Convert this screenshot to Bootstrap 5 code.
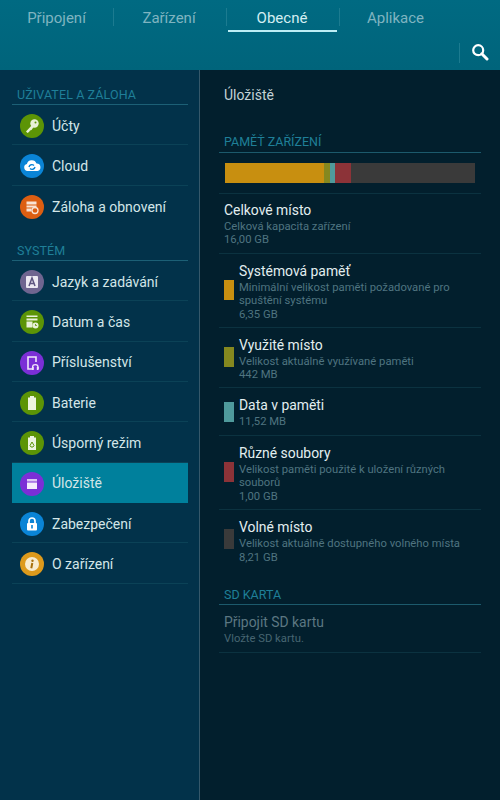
<!DOCTYPE html>
<html lang="cs">
<head>
    <meta charset="UTF-8">
    <meta name="viewport" content="width=device-width, initial-scale=1.0">
    <title>Úložiště</title>
    <link href="https://cdn.jsdelivr.net/npm/bootstrap@5.3.0/dist/css/bootstrap.min.css" rel="stylesheet">
    <style>
        html, body { height: 800px; overflow: hidden; }
        body { background: #021f2d; font-family: Roboto, "Noto Sans", sans-serif; color: #dfeef0; }

        /* top bar */
        .top-bar { height: 70px; background: linear-gradient(#006a82, #00647b); }
        .tab-row { height: 35px; }
        .tab-item { height: 32px; font-size: 15px; color: #7fb4c0; line-height: 36px; text-align: center; }
        .tab-one { width: 113px; }
        .tab-two { width: 112px; padding-right: 2px; }
        .tab-three { width: 109px; margin: 0 2px 0 1px; color: #d4eef2; border-bottom: 2px solid #bdeef5; padding-right: 1px; }
        .tab-four { width: 111px; }
        .tab-sep { width: 1px; height: 18px; margin-top: 8px; background: #1c7b90; }
        .search-row { height: 35px; }
        .search-sep { width: 1px; height: 20px; margin-top: 8px; background: #1c7b90; }
        .search-ico { width: 18px; height: 18px; margin: 8px 11px 0 11px; }

        /* left menu */
        .side-menu { width: 200px; height: 730px; background: #02324a; border-right: 1px solid #35586a; padding: 0 11px 0 12px; }
        .sect-head { height: 35px; padding: 18px 0 0 5px; font-size: 12.5px; line-height: 14px; letter-spacing: .1px; color: #1f7f98; border-bottom: 1px solid #1c6076; }
        .menu-row { height: 40.33px; padding: 3px 0 0 8px; background: transparent; border: 0; border-bottom: 1px solid #0b4257; color: #d3e6e8; font-size: 14px; gap: 8px; border-radius: 0 !important; }
        .menu-row.on { background: #00809c; border-bottom-color: #00809c; }
        .menu-row.last { border-bottom: 0; }
        .round-ico { width: 24px; height: 24px; border-radius: 50%; flex: none; }
        .round-ico svg { width: 24px; height: 24px; display: block; }
        .i-green { background: #5c9406; }
        .i-blue { background: #0a84d6; }
        .i-orange { background: #dc5e12; }
        .i-grey { background: #6f6590; }
        .i-violet { background: #7b2fd6; }
        .i-amber { background: #dd9a1c; }

        /* right pane */
        .main-pane { width: 300px; padding: 0 19px; }
        .pane-title { height: 48px; padding: 16px 0 0 5px; font-size: 14px; line-height: 18px; color: #c2d2d6; }
        .pane-head { height: 35px; padding: 18px 0 0 5px; font-size: 12.5px; line-height: 14px; color: #1f7f98; border-bottom: 1px solid #1c5a6c; }
        .pane-head.top-head { padding-top: 17px; }
        .usage-wrap { height: 41px; padding: 10px 6px 0; border-bottom: 1px solid #0b3240; }
        .usage-bar { height: 20px; background: #3a3a3a; border-radius: 0; }
        .usage-bar > div { height: 20px; }
        .info-row { border-bottom: 1px solid #0b3240; padding-left: 5px; }
        .info-row.swatched { gap: 5px; }
        .info-row.no-line { border-bottom: 0; }
        .info-text { padding-top: 2px; }
        .info-title { font-size: 13.9px; line-height: 18px; margin-bottom: 1px; color: #e2eef0; }
        .info-sub { font-size: 11.25px; line-height: 13.4px; color: #4f7480; }
        .row-plain { height: 60px; padding-top: 7px; }
        .row-tall { height: 74px; }
        .row-mid { height: 60px; }
        .row-low { height: 48px; }
        .row-sd { height: 48px; padding-top: 8px; }
        .swatch { width: 10px; height: 20px; flex: none; margin-top: -2px; }
        .row-low .swatch { margin-top: 0; }
        .muted-row .info-title { color: #5c7782; }
        .muted-row .info-sub { color: #466571; }
        .c-yellow { background: #c88f10; }
        .c-olive { background: #85881f; }
        .c-teal { background: #4f9a9c; }
        .c-red { background: #8c3338; }
        .c-gray { background: #3a3a3a; }
    </style>
</head>
<body>
    <div class="top-bar">
        <div class="d-flex tab-row">
            <div class="tab-item tab-one">Připojení</div>
            <div class="tab-sep"></div>
            <div class="tab-item tab-two">Zařízení</div>
            <div class="tab-sep"></div>
            <div class="tab-item tab-three">Obecné</div>
            <div class="tab-sep"></div>
            <div class="tab-item tab-four">Aplikace</div>
        </div>
        <div class="d-flex justify-content-end search-row">
            <div class="search-sep"></div>
            <svg class="search-ico" viewBox="0 0 18 18">
                <circle cx="7.2" cy="7.2" r="5" fill="none" stroke="#fff" stroke-width="2.2"/>
                <path d="M10.8 10.8L16 16" stroke="#fff" stroke-width="3" stroke-linecap="round"/>
            </svg>
        </div>
    </div>

    <div class="d-flex">
        <div class="side-menu">
            <div class="sect-head">UŽIVATEL A ZÁLOHA</div>
            <div class="list-group">
                <div class="list-group-item d-flex align-items-center menu-row">
                    <span class="round-ico i-green">
                        <svg viewBox="0 0 24 24"><circle cx="14.5" cy="9.5" r="4.2" fill="#e8f0d8"/><path d="M12 11L6 17.5l1.5 1.5 1.500-1 1-1.500 1.500-.5 2.500-3.500z" fill="#e8f0d8"/><circle cx="15.5" cy="8.5" r="1" fill="#5c9406"/></svg>
                    </span>Účty
                </div>
                <div class="list-group-item d-flex align-items-center menu-row">
                    <span class="round-ico i-blue">
                        <svg viewBox="0 0 24 24"><path d="M7.500 17a3.500 3.500 0 0 1-.6-6.900A5 5 0 0 1 16.500 9.500a3.800 3.800 0 0 1 1 7.500z" fill="#fff"/><path d="M9 13a3 3 0 0 1 5-1.500M15 13a3 3 0 0 1-5 1.500" fill="none" stroke="#0a84d6" stroke-width="1.400"/></svg>
                    </span>Cloud
                </div>
                <div class="list-group-item d-flex align-items-center menu-row last">
                    <span class="round-ico i-orange">
                        <svg viewBox="0 0 24 24"><path d="M6.500 6.500h10v3h-10zM6.500 10.500h10v2h-10zM6.500 13.500h5v3h-5z" fill="#f8e3d4"/><circle cx="15" cy="15.500" r="3" fill="#dc5e12" stroke="#f8e3d4" stroke-width="1.300"/></svg>
                    </span>Záloha a obnovení
                </div>
            </div>
            <div class="sect-head">SYSTÉM</div>
            <div class="list-group">
                <div class="list-group-item d-flex align-items-center menu-row">
                    <span class="round-ico i-grey">
                        <svg viewBox="0 0 24 24"><rect x="6" y="6" width="12" height="12" rx="1" fill="#ece9f2"/><path d="M9 16l3-8 3 8M10 13.500h4" fill="none" stroke="#5d5580" stroke-width="1.500"/></svg>
                    </span>Jazyk a zadávání
                </div>
                <div class="list-group-item d-flex align-items-center menu-row">
                    <span class="round-ico i-green">
                        <svg viewBox="0 0 24 24"><path d="M6.500 5.500h11v1.500h-11zM6.500 8.500h11v2h-11zM6.500 11.500h6v6h-6z" fill="#e8f0d8"/><circle cx="15.500" cy="15.500" r="3" fill="#e8f0d8"/><path d="M15.500 14v1.500h1.300" fill="none" stroke="#5c9406" stroke-width=".9"/></svg>
                    </span>Datum a čas
                </div>
                <div class="list-group-item d-flex align-items-center menu-row">
                    <span class="round-ico i-violet">
                        <svg viewBox="0 0 24 24"><path d="M12 18H8V6h8v5" fill="none" stroke="#f0e6fa" stroke-width="1.600"/><path d="M12.500 18v-1.500a2.800 2.800 0 0 1 5.600 0V18" fill="none" stroke="#f0e6fa" stroke-width="1.300"/><rect x="12" y="16" width="1.800" height="3" fill="#f0e6fa"/><rect x="16.800" y="16" width="1.800" height="3" fill="#f0e6fa"/></svg>
                    </span>Příslušenství
                </div>
                <div class="list-group-item d-flex align-items-center menu-row">
                    <span class="round-ico i-green">
                        <svg viewBox="0 0 24 24"><path d="M10 5h4v1.500h2V19H8V6.500h2z" fill="#eef4e0"/></svg>
                    </span>Baterie
                </div>
                <div class="list-group-item d-flex align-items-center menu-row">
                    <span class="round-ico i-green">
                        <svg viewBox="0 0 24 24"><path d="M10 5h4v1.500h2V19H8V6.500h2z" fill="#eef4e0"/><path d="M10 14.500l2-3.500 2 3.500-1 1.500h-2z" fill="none" stroke="#5c9406" stroke-width="1"/></svg>
                    </span>Úsporný režim
                </div>
                <div class="list-group-item d-flex align-items-center menu-row on">
                    <span class="round-ico i-violet">
                        <svg viewBox="0 0 24 24"><rect x="7" y="7" width="10" height="2.500" fill="#dcc8f4"/><rect x="7" y="10.500" width="10" height="6.500" fill="#f4ecfc"/></svg>
                    </span>Úložiště
                </div>
                <div class="list-group-item d-flex align-items-center menu-row">
                    <span class="round-ico i-blue">
                        <svg viewBox="0 0 24 24"><path d="M9 11V9a3 3 0 0 1 6 0v2" fill="none" stroke="#fff" stroke-width="1.700"/><rect x="7" y="11" width="10" height="7.500" rx="1" fill="#fff"/><rect x="11.200" y="13" width="1.600" height="3.500" fill="#0a84d6"/></svg>
                    </span>Zabezpečení
                </div>
                <div class="list-group-item d-flex align-items-center menu-row">
                    <span class="round-ico i-amber">
                        <svg viewBox="0 0 24 24"><circle cx="12" cy="12" r="7" fill="#f8ecd0"/><circle cx="12.500" cy="8.700" r="1.200" fill="#a8700c"/><path d="M12.300 11l-1 5.300" stroke="#a8700c" stroke-width="2"/></svg>
                    </span>O zařízení
                </div>
            </div>
        </div>

        <div class="main-pane">
            <div class="pane-title">Úložiště</div>
            <div class="pane-head top-head">PAMĚŤ ZAŘÍZENÍ</div>
            <div class="usage-wrap">
                <div class="d-flex usage-bar">
                    <div class="c-yellow" style="width:39.6%"></div>
                    <div class="c-olive" style="width:2.4%"></div>
                    <div class="c-teal" style="width:2%"></div>
                    <div class="c-red" style="width:6.4%"></div>
                    <div class="c-gray" style="width:49.6%"></div>
                </div>
            </div>
            <div class="info-row row-plain">
                <div class="info-title">Celkové místo</div>
                <div class="info-sub">Celková kapacita zařízení<br>16,00 GB</div>
            </div>
            <div class="info-row d-flex align-items-center swatched row-tall">
                <div class="swatch c-yellow"></div>
                <div class="info-text">
                    <div class="info-title">Systémová paměť</div>
                    <div class="info-sub">Minimální velikost paměti požadované pro<br>spuštění systému<br>6,35 GB</div>
                </div>
            </div>
            <div class="info-row d-flex align-items-center swatched row-mid">
                <div class="swatch c-olive"></div>
                <div class="info-text">
                    <div class="info-title">Využité místo</div>
                    <div class="info-sub">Velikost aktuálně využívané paměti<br>442 MB</div>
                </div>
            </div>
            <div class="info-row d-flex align-items-center swatched row-low">
                <div class="swatch c-teal"></div>
                <div class="info-text">
                    <div class="info-title">Data v paměti</div>
                    <div class="info-sub">11,52 MB</div>
                </div>
            </div>
            <div class="info-row d-flex align-items-center swatched row-tall">
                <div class="swatch c-red"></div>
                <div class="info-text">
                    <div class="info-title">Různé soubory</div>
                    <div class="info-sub">Velikost paměti použité k uložení různých<br>souborů<br>1,00 GB</div>
                </div>
            </div>
            <div class="info-row no-line d-flex align-items-center swatched row-mid">
                <div class="swatch c-gray"></div>
                <div class="info-text">
                    <div class="info-title">Volné místo</div>
                    <div class="info-sub">Velikost aktuálně dostupného volného místa<br>8,21 GB</div>
                </div>
            </div>
            <div class="pane-head">SD KARTA</div>
            <div class="info-row muted-row row-sd">
                <div class="info-title">Připojit SD kartu</div>
                <div class="info-sub">Vložte SD kartu.</div>
            </div>
        </div>
    </div>
    <script src="https://cdn.jsdelivr.net/npm/bootstrap@5.3.0/dist/js/bootstrap.bundle.min.js"></script>
</body>
</html>
